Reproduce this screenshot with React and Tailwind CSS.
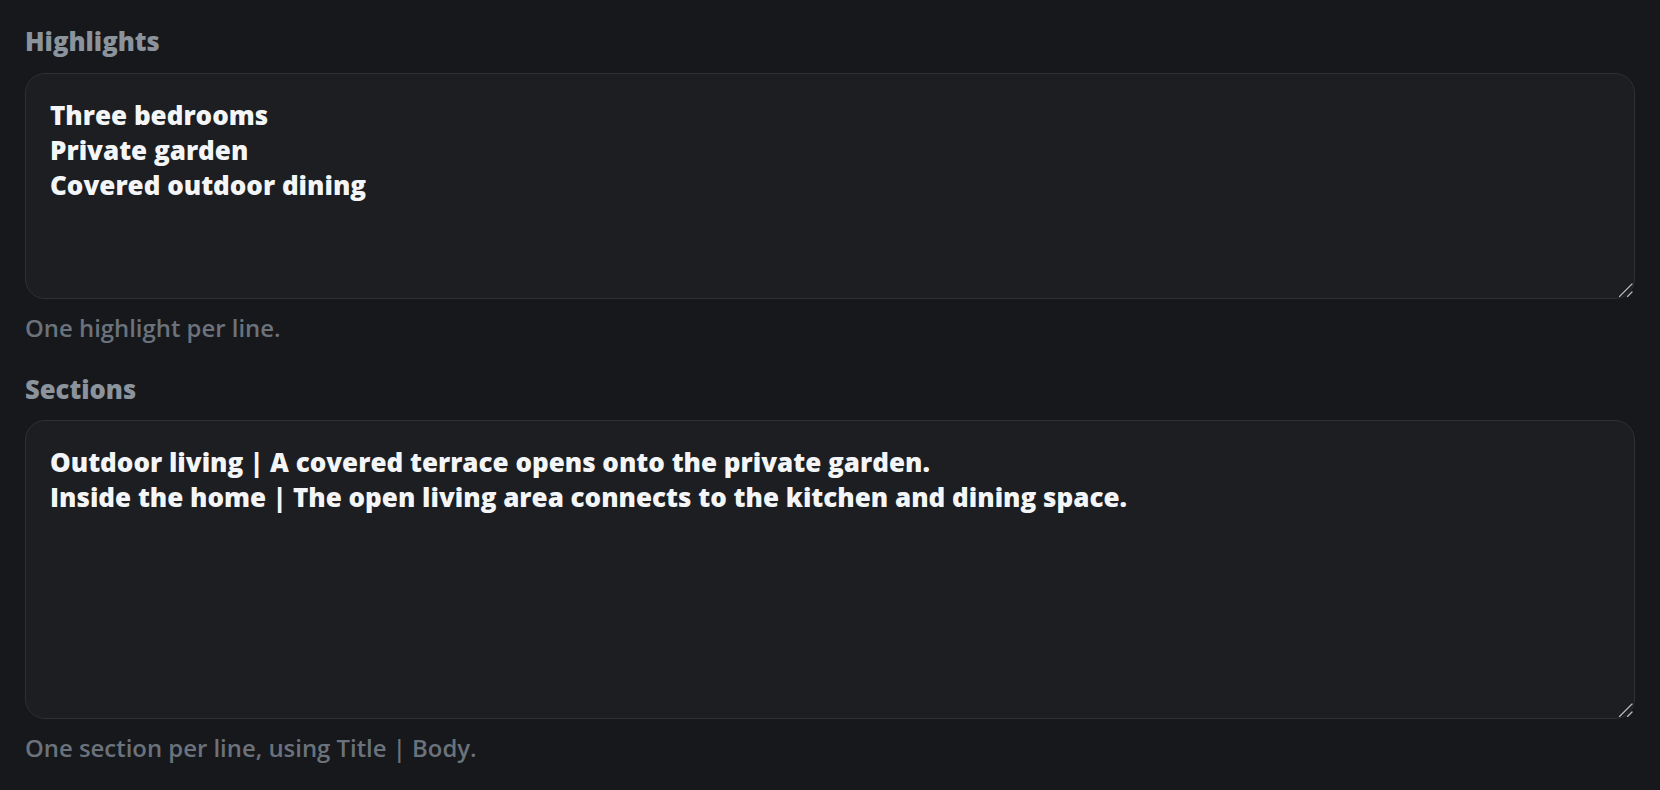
import React from "react";

const font = { fontFamily: '"Open Sans", "Noto Sans", sans-serif' };

function Grip() {
  return (
    <svg
      className="pointer-events-none absolute bottom-[2px] right-[2px]"
      width="16"
      height="16"
      viewBox="0 0 16 16"
    >
      <path d="M2.5 15.5 L15 3" stroke="#111214" strokeWidth="3" strokeLinecap="round" />
      <path d="M10.5 15.5 L15 11" stroke="#111214" strokeWidth="3" strokeLinecap="round" />
      <path d="M2.5 15.5 L15 3" stroke="#b4b6ba" strokeWidth="1.4" strokeLinecap="round" />
      <path d="M10.5 15.5 L15 11" stroke="#b4b6ba" strokeWidth="1.4" strokeLinecap="round" />
    </svg>
  );
}

function Field({ label, value, help, height }) {
  return (
    <div className="flex flex-col">
      <label className="text-[25.6px] leading-[34.5px] font-extrabold text-[#8b939d]">{label}</label>
      <div className={`relative mt-[13px] ${height}`}>
        <textarea
          defaultValue={value}
          spellCheck={false}
          className="h-full w-full resize-none rounded-[20px] border-[1.6px] border-[#2d3035] bg-[#1c1e22] px-[24px] py-[24px] text-[26px] leading-[35px] font-extrabold text-[#f4f5f7] outline-none"
          style={font}
        />
        <Grip />
      </div>
      <p className="mt-[12.5px] text-[23.9px] leading-[34.5px] font-semibold text-[#6b727c]">{help}</p>
    </div>
  );
}

export default function App() {
  return (
    <div className="min-h-[790px] w-full bg-[#16181b] px-[25px] pt-[25px]" style={font}>
      <div className="flex flex-col gap-[27px]">
        <Field
          label="Highlights"
          value={"Three bedrooms\nPrivate garden\nCovered outdoor dining"}
          help="One highlight per line."
          height="h-[226px]"
        />
        <Field
          label="Sections"
          value={"Outdoor living | A covered terrace opens onto the private garden.\nInside the home | The open living area connects to the kitchen and dining space."}
          help="One section per line, using Title | Body."
          height="h-[298.5px]"
        />
      </div>
    </div>
  );
}
